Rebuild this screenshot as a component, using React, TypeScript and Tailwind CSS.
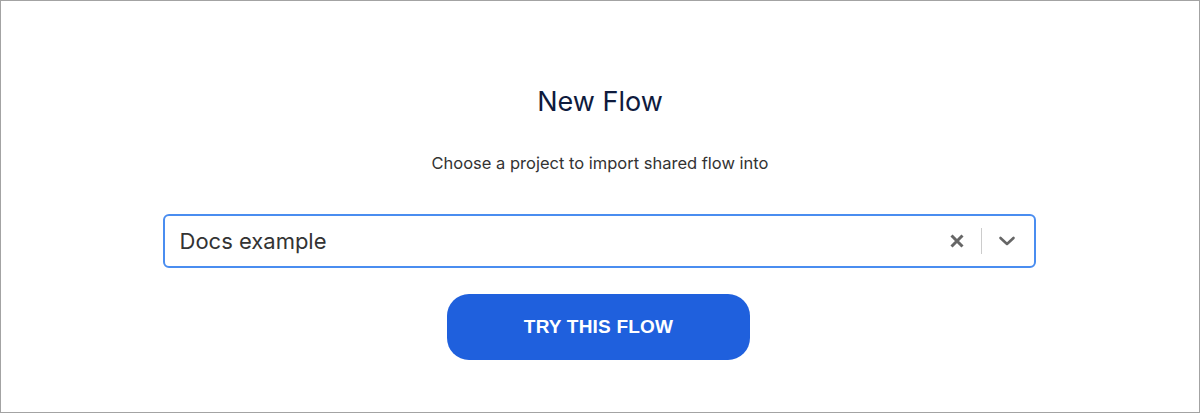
import React from "react";

export default function App() {
  return (
    <div className="w-[1200px] h-[413px] bg-white border border-[#a3a3a3] flex flex-col items-center" style={{ fontFamily: "Inter, 'Noto Sans', sans-serif" }}>
      <h1 className="mt-[83px] text-[27px] leading-[36px] text-[#0f1b3d] font-normal">New Flow</h1>
      <p className="mt-[31px] text-[16.5px] leading-[24px] text-[#333333]">Choose a project to import shared flow into</p>
      <div className="mt-[39px] ml-[-2px] w-[873px] h-[54px] border-2 border-[#4a8df0] rounded-[6px] flex items-center pl-[15px] pr-[10px]">
        <span className="flex-1 text-[22px] text-[#333333]">Docs example</span>
        <svg width="16" height="16" viewBox="0 0 16 16" className="mr-[16px]">
          <path d="M2.5 2.5 L13.5 13.5 M13.5 2.5 L2.5 13.5" stroke="#666666" strokeWidth="3" strokeLinecap="butt" />
        </svg>
        <div className="w-px h-[26px] bg-[#cccccc]" />
        <svg width="18" height="12" viewBox="0 0 18 12" className="ml-[16px] mr-[8px]">
          <path d="M2.5 3 L9 9 L15.5 3" stroke="#666666" strokeWidth="2.6" fill="none" strokeLinecap="round" strokeLinejoin="round" />
        </svg>
      </div>
      <button className="mt-[26px] ml-[-3px] w-[303px] h-[66px] rounded-[22px] bg-[#1f60dd] text-white text-[19px] font-bold tracking-[0.2px]" style={{ fontFamily: "'Liberation Sans', Arial, sans-serif" }}>
        TRY THIS FLOW
      </button>
    </div>
  );
}
